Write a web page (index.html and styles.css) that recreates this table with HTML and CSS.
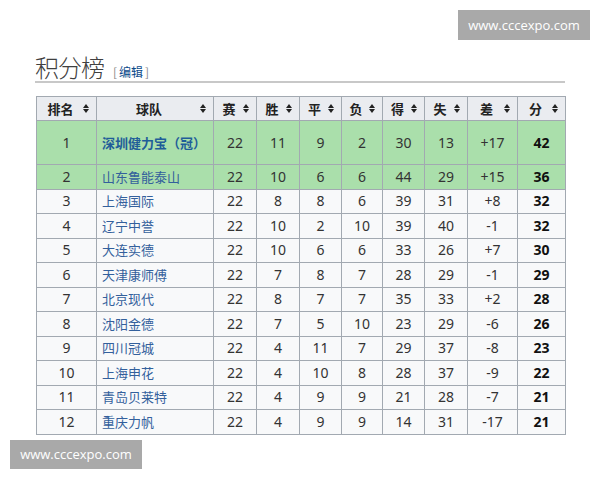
FILE: index.html
```html
<!DOCTYPE html>
<html lang="zh">
<head>
<meta charset="utf-8">
<link rel="stylesheet" href="styles.css">
</head>
<body>
<div class="page">
  <div class="heading">
    <h2 class="title">积分榜</h2>
    <span class="edit"><span class="br">[</span><a>编辑</a><span class="br">]</span></span>
  </div>
  <table class="standings">
    <colgroup>
      <col style="width:60px"><col style="width:117px"><col style="width:43px"><col style="width:43px"><col style="width:42px"><col style="width:41px"><col style="width:42px"><col style="width:43px"><col style="width:50px"><col style="width:48px">
    </colgroup>
    <thead>
      <tr>
        <th><span class="h">排名</span><i class="sort"></i></th>
        <th><span class="h">球队</span><i class="sort"></i></th>
        <th><span class="h">赛</span><i class="sort"></i></th>
        <th><span class="h">胜</span><i class="sort"></i></th>
        <th><span class="h">平</span><i class="sort"></i></th>
        <th><span class="h">负</span><i class="sort"></i></th>
        <th><span class="h">得</span><i class="sort"></i></th>
        <th><span class="h">失</span><i class="sort"></i></th>
        <th><span class="h">差</span><i class="sort"></i></th>
        <th><span class="h">分</span><i class="sort"></i></th>
      </tr>
    </thead>
    <tbody>
      <tr class="green tall"><td>1</td><td class="team"><a class="champ">深圳健力宝（冠）</a></td><td>22</td><td>11</td><td>9</td><td>2</td><td>30</td><td>13</td><td>+17</td><td class="pts">42</td></tr>
      <tr class="green"><td>2</td><td class="team"><a>山东鲁能泰山</a></td><td>22</td><td>10</td><td>6</td><td>6</td><td>44</td><td>29</td><td>+15</td><td class="pts">36</td></tr>
      <tr><td>3</td><td class="team"><a>上海国际</a></td><td>22</td><td>8</td><td>8</td><td>6</td><td>39</td><td>31</td><td>+8</td><td class="pts">32</td></tr>
      <tr><td>4</td><td class="team"><a>辽宁中誉</a></td><td>22</td><td>10</td><td>2</td><td>10</td><td>39</td><td>40</td><td>-1</td><td class="pts">32</td></tr>
      <tr><td>5</td><td class="team"><a>大连实德</a></td><td>22</td><td>10</td><td>6</td><td>6</td><td>33</td><td>26</td><td>+7</td><td class="pts">30</td></tr>
      <tr><td>6</td><td class="team"><a>天津康师傅</a></td><td>22</td><td>7</td><td>8</td><td>7</td><td>28</td><td>29</td><td>-1</td><td class="pts">29</td></tr>
      <tr><td>7</td><td class="team"><a>北京现代</a></td><td>22</td><td>8</td><td>7</td><td>7</td><td>35</td><td>33</td><td>+2</td><td class="pts">28</td></tr>
      <tr><td>8</td><td class="team"><a>沈阳金德</a></td><td>22</td><td>7</td><td>5</td><td>10</td><td>23</td><td>29</td><td>-6</td><td class="pts">26</td></tr>
      <tr><td>9</td><td class="team"><a>四川冠城</a></td><td>22</td><td>4</td><td>11</td><td>7</td><td>29</td><td>37</td><td>-8</td><td class="pts">23</td></tr>
      <tr><td>10</td><td class="team"><a>上海申花</a></td><td>22</td><td>4</td><td>10</td><td>8</td><td>28</td><td>37</td><td>-9</td><td class="pts">22</td></tr>
      <tr><td>11</td><td class="team"><a>青岛贝莱特</a></td><td>22</td><td>4</td><td>9</td><td>9</td><td>21</td><td>28</td><td>-7</td><td class="pts">21</td></tr>
      <tr><td>12</td><td class="team"><a>重庆力帆</a></td><td>22</td><td>4</td><td>9</td><td>9</td><td>14</td><td>31</td><td>-17</td><td class="pts">21</td></tr>
    </tbody>
  </table>
</div>
<div class="wm wm-top">www.cccexpo.com</div>
<div class="wm wm-bottom">www.cccexpo.com</div>
</body>
</html>
```

FILE: styles.css
```css
html, body {
  margin: 0;
  padding: 0;
  background: #ffffff;
}
body {
  width: 600px;
  height: 480px;
  position: relative;
  overflow: hidden;
  font-family: "Noto Sans", "Noto Sans CJK SC", sans-serif;
  color: #222;
}
.page {
  padding: 52px 35px 0 35px;
}
.heading {
  display: flex;
  align-items: baseline;
  gap: 7px;
  width: 530px;
  border-bottom: 2px solid #c8c8c8;
  padding-bottom: 0;
  height: 29px;
}
.title {
  margin: 0;
  font-family: "Noto Sans CJK SC", sans-serif;
  font-weight: 300;
  font-size: 24px;
  line-height: 29px;
  color: #404040;
  letter-spacing: -1px;
}
.edit {
  font-family: "Noto Sans CJK SC", sans-serif;
  font-size: 12px;
  color: #54595d;
}
.edit .br {
  color: #888;
  margin: 0 2px;
}
.edit a {
  color: #0b4a8a;
}
.standings {
  margin-top: 13px;
  margin-left: 1px;
  border-collapse: collapse;
  table-layout: fixed;
  width: 529px;
  background: #f8f9fa;
  border: 1px solid #a2a9b1;
  font-size: 14px;
}
.standings th, .standings td {
  border: 1px solid #a2a9b1;
  padding: 0 4px;
  text-align: center;
  white-space: nowrap;
}
.standings th {
  background: #eaecf0;
  height: 23px;
  font-family: "Noto Sans CJK SC", sans-serif;
  font-weight: 700;
  font-size: 13px;
  color: #222;
  position: relative;
  padding-right: 16px;
}
.sort {
  position: absolute;
  right: 6px;
  top: 7px;
  width: 7px;
  height: 10px;
}
.sort::before, .sort::after {
  content: "";
  position: absolute;
  left: 0;
  border-left: 3.5px solid transparent;
  border-right: 3.5px solid transparent;
}
.sort::before {
  top: 0;
  border-bottom: 4px solid #222;
}
.sort::after {
  top: 5px;
  border-top: 4px solid #222;
}
.standings td {
  height: 23.5px;
  color: #333;
  line-height: 18px;
}
.standings tr.tall td {
  height: 43px;
}
.standings tr.green td {
  background: #aadfab;
}
.standings td.team {
  text-align: left;
  padding-left: 5px;
}
.team a {
  font-family: "Noto Sans CJK SC", sans-serif;
  font-size: 13px;
  color: #33609c;
}
.team a.champ {
  font-weight: 700;
  color: #1f5d99;
}
.standings td.pts {
  font-weight: 700;
  color: #111;
}
.wm {
  position: absolute;
  background: #a9a9a9;
  color: #ffffff;
  font-family: "Open Sans", "Liberation Sans", sans-serif;
  font-size: 13px;
  height: 30px;
  line-height: 30px;
  text-align: center;
}
.wm-top {
  left: 458px;
  top: 10px;
  width: 132px;
}
.wm-bottom {
  left: 10px;
  top: 440px;
  width: 132px;
  height: 29px;
  line-height: 29px;
}
```
